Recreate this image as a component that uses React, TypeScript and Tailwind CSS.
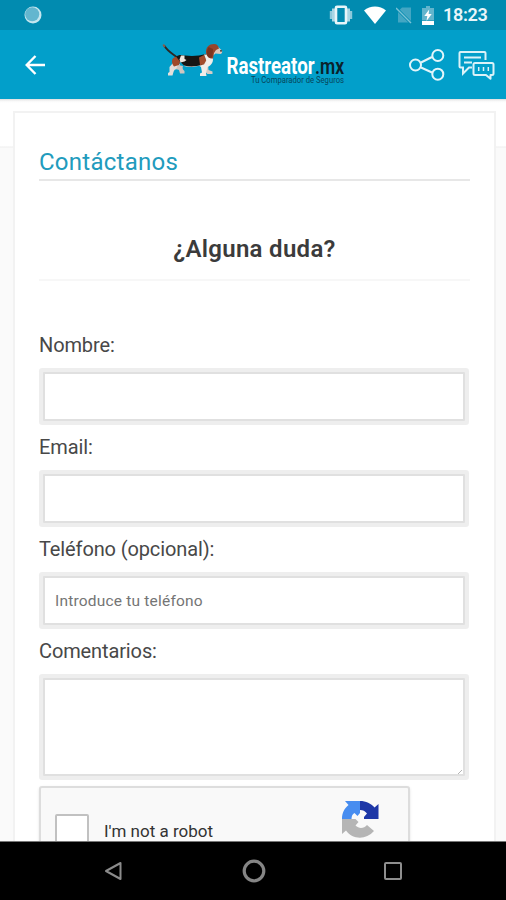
import type { ReactNode } from 'react';

interface FieldProps {
  label: string;
  children: ReactNode;
}

const inputClass =
  'block w-full rounded-[1px] border-2 border-[#e0e0e0] bg-white px-[10px] text-[15.5px] tracking-[0.2px] text-gray-700 outline-none ring-4 ring-[#eeeeee] placeholder:text-[#757575]';

function StatusBar() {
  return (
    <div className="flex h-[30px] shrink-0 items-center bg-[#018bb0] pl-[24px] text-white">
      <svg className="h-[18px] w-[18px]" viewBox="0 0 18 18">
        <circle cx="9" cy="9" r="8.5" fill="#c5e6ef" />
        <circle cx="8.2" cy="8.2" r="7" fill="#63b6cf" />
      </svg>
      <svg className="ml-[287px] h-[20px] w-[24px]" viewBox="0 0 24 20">
        <rect x="0.8" y="6" width="2.2" height="8" fill="#8dc9db" />
        <rect x="3" y="3.5" width="3" height="13" fill="#a9d6e4" />
        <rect x="18" y="3.5" width="3" height="13" fill="#a9d6e4" />
        <rect x="21" y="6" width="2.2" height="8" fill="#8dc9db" />
        <rect x="7" y="1.8" width="10" height="16.4" rx="1" fill="none" stroke="#e7f5f9" strokeWidth="2.6" />
      </svg>
      <svg className="ml-[11px] h-[18px] w-[22px]" viewBox="0 0 22 18">
        <path d="M0 4.5C6-1 16-1 22 4.5L11 18Z" fill="#fff" />
      </svg>
      <svg className="ml-[10px] h-[18px] w-[16px]" viewBox="0 0 16 18">
        <path d="M6 1.500h9v15H2V5.500Z" fill="#43a6c3" />
        <path d="M0 2 15 17" stroke="#018bb0" strokeWidth="3" />
        <path d="M0 2 15 17" stroke="#7cc2d6" strokeWidth="1.5" />
      </svg>
      <svg className="ml-[10px] h-[19px] w-[12px]" viewBox="0 0 12 19">
        <path d="M4 0h4v2h4v12H0V2h4Z" fill="#62b5cd" />
        <path d="M0 14.8h12V19H0Z" fill="#fff" />
        <path d="M7.2 3.5 2.3 10h3L4.5 15l5.2-7H6.6Z" fill="#fff" />
      </svg>
      <span className="ml-[9px] text-[18px] font-semibold leading-[30px] tracking-[-0.3px] text-[#e9f6fa]">18:23</span>
    </div>
  );
}

function Logo() {
  return (
    <svg className="h-[56px] w-[190px] overflow-visible" viewBox="161 37 190 56">
      {/* Basset hound */}
      <path d="M164.500 46c3 5 7 7 12 11" fill="none" stroke="#2b2724" strokeWidth="1.800" strokeLinecap="round" />
      <path d="M163.300 44.500l1.500 2.500" stroke="#8c5a4a" strokeWidth="1.800" />
      <path d="M173 63l7 1-2 5c-3 0-4 1-4.500 3l-1 3.500h-4.500v-2.500l1.500-1v-5Z" fill="#e4dfdb" />
      <path d="M178 65l5 1c-1 2 0 4 1.500 5v2.500H180l-1-3.500-3-1Z" fill="#cfc6c0" />
      <path d="M204 64l4 0 .5 6 4 1.500V74h-5l-3-3Z" fill="#d5cdc7" />
      <path d="M198 65l11-10 3.500 2c1.500 4-.5 8-5 10l-1.500 6 .5 3H200v-2.500l2-1-1-5.500Z" fill="#f0ece8" />
      <path d="M184 66c5 1.500 10 1.500 17-1l-2-3h-14Z" fill="#e6dfd9" />
      <path d="M172.500 59c2-3 6-3.500 9-1l-2.500 7-5 1.500c-2-2-2.500-5-1.500-7.500Z" fill="#a04a2a" />
      <path d="M176 56.500c2-1.500 5-2 9-1 7 1 14 .5 21-1.500l1 4-5 7c-6 1.500-12 2-18 .5l-4-4Z" fill="#171513" />
      <path d="M181 55.500l3.500 0 0 3.500 2 1-2 1.500-4 1-1-3Z" fill="#efe7df" />
      <path d="M199 57.500l5-2.500 2.500 5-2.500 4.500-4 .5Z" fill="#a34c2c" />
      <path d="M204 54.500l3 0 4 8-3 2Z" fill="#f3efeb" />
      <path d="M212 46l5 0 5 4.500c.5 1.500 0 3-1.500 3.500l-5-.5-3.500 3Z" fill="#dcc7bc" />
      <path d="M206 52c0-5 3-8 8-8 3 0 4.500 2 5 4.500l-3 1.500-2 3-1 5.500c-4 .5-7-3-7-6.500Z" fill="#96452b" />
      <path d="M208.500 47c-2 3-2 7-.5 10 2 1.500 4 1 4.500-1l.5-7Z" fill="#7b341f" />
      <circle cx="221" cy="50.800" r=".9" fill="#29201c" />
      <g fontFamily="Roboto, 'Liberation Sans', sans-serif">
        <text x="226.500" y="74" fontSize="23" fontWeight="700" fill="#fff" textLength="88" lengthAdjust="spacingAndGlyphs">
          Rastreator
        </text>
        <text x="315" y="74" fontSize="22" fontWeight="600" fill="#0b222b" textLength="29" lengthAdjust="spacingAndGlyphs">
          .mx
        </text>
        <text x="251" y="82.800" fontSize="8.500" fill="#07465a" textLength="93" lengthAdjust="spacingAndGlyphs">
          Tu Comparador de Seguros
        </text>
      </g>
    </svg>
  );
}

function Header() {
  return (
    <header className="flex h-[69px] shrink-0 items-center bg-[#029fca]">
      <svg className="ml-[25px] h-[20px] w-[21px]" viewBox="0 0 21 20" fill="none" stroke="#fff" strokeWidth="2.4">
        <path d="M20 10H2M10.500 1 1.700 10l8.800 9" />
      </svg>
      <div className="ml-[115px]">
        <Logo />
      </div>
      <svg className="ml-[58px] h-[32px] w-[36px]" viewBox="0 0 36 32" fill="none" stroke="#e3f5fa" strokeWidth="2">
        <path d="M12 13.500 23 8M12 18.500l11 5" />
        <circle cx="6.500" cy="16" r="5.500" />
        <circle cx="28.800" cy="6.500" r="5.500" />
        <circle cx="28.800" cy="25.200" r="5.500" />
      </svg>
      <svg className="ml-[13px] h-[30px] w-[37px]" viewBox="0 0 37 30" fill="none" stroke="#dbf2f8" strokeWidth="2">
        <path d="M27.500 10V3q0-1-1-1h-24q-1 0-1 1v13.500q0 1 1 1H5v6l6-6h3" />
        <path d="M6 7.500h17M6 12.500h8" />
        <path d="M17 13h17q1.500 0 1.500 1.500v9q0 1.500-1.500 1.500h-1.500v3.800L28 25H17q-1.500 0-1.500-1.500v-9Q15.500 13 17 13Z" strokeLinejoin="round" />
        <path d="M20.700 17v4M25.500 17v4M30.300 17v4" strokeWidth="1.500" />
      </svg>
    </header>
  );
}

function Field({ label, children }: FieldProps) {
  return (
    <label className="block">
      <span className="block h-[39px] text-[20px] leading-[24px] tracking-[-0.12px] text-[#484848]">{label}</span>
      <span className="block pl-[4px] pr-[5px]">{children}</span>
    </label>
  );
}

function Recaptcha() {
  return (
    <div className="flex h-[100px] w-[371px] rounded-[3px] border-2 border-[#dddddd] bg-[#f9f9f9] shadow-sm">
      <div className="ml-[14px] mt-[26px] h-[35px] w-[34px] rounded-[2px] border-2 border-[#c1c1c1] bg-white" />
      <span className="ml-[15px] mt-[31px] text-[17px] leading-[24px] text-[#333]">I&apos;m not a robot</span>
      <svg className="ml-[128px] mt-[12px] h-[38px] w-[38px]" viewBox="0 0 38 38">
        <path d="M19 1H4l3.500 4C3 9 1 13 1 19h9.500c0-3 1-5 3-6l3 3 2.500-3Z" fill="#478df0" />
        <path d="M19 1v9c3 0 5 1 7 3.500L23 17v2h14.500V4l-4 3.500C30 3.500 25 1 19 1Z" fill="#1e37a7" />
        <path d="M1 19v15l4-3.500c7 9.500 20 9.500 28 .5l-7-6c-3 3.500-8 4-11.500.5l3-3.500-3-3Z" fill="#b5b5b5" />
      </svg>
    </div>
  );
}

function NavigationBar() {
  return (
    <nav className="flex h-[59px] shrink-0 items-center border-t border-[#777] bg-black">
      <svg className="ml-[104px] h-[20px] w-[19px]" viewBox="0 0 19 20">
        <path d="M16.500 2v16L2 10Z" fill="none" stroke="#8b8b8b" strokeWidth="2" strokeLinejoin="round" />
      </svg>
      <svg className="ml-[119px] h-[24px] w-[24px]" viewBox="0 0 24 24">
        <circle cx="12" cy="12" r="9.800" fill="none" stroke="#858585" strokeWidth="3.200" />
      </svg>
      <div className="ml-[118px] h-[18px] w-[18px] rounded-[2px] border-2 border-[#8e8e8e]" />
    </nav>
  );
}

export default function App() {
  return (
    <div className="flex h-[900px] w-[506px] flex-col overflow-hidden bg-[#fafafa] font-[Roboto,'Liberation_Sans',sans-serif]">
      <StatusBar />
      <Header />
      <main className="h-[742px] shrink-0 overflow-hidden bg-[linear-gradient(#dedede_0px,#f8f8f8_2px,#ffffff_4px,#ffffff_47px,#eeeeee_48px,#fafafa_49px)] pl-[13px] pt-[12px]">
        <section className="h-[800px] w-[483px] border-2 border-[#f2f2f2] bg-white px-[24px]">
          <h1 className="mt-[34px] h-[34px] border-b-2 border-[#e7e7e7] text-[24px] leading-[30px] tracking-[0.25px] text-[#219bbd]">
            Contáctanos
          </h1>
          <h2 className="h-[100px] border-b-2 border-[#f7f7f7] pt-[54px] text-center text-[24px] font-semibold leading-[28px] tracking-[0.3px] text-[#3b3b3b]">
            ¿Alguna duda?
          </h2>
          <form className="mt-[52px]">
            <div className="space-y-[14px]">
              <Field label="Nombre:">
                <input className={`${inputClass} h-[49px]`} type="text" />
              </Field>
              <Field label="Email:">
                <input className={`${inputClass} h-[49px]`} type="email" />
              </Field>
              <Field label="Teléfono (opcional):">
                <input className={`${inputClass} h-[49px]`} type="tel" placeholder="Introduce tu teléfono" />
              </Field>
              <Field label="Comentarios:">
                <span className="relative block">
                  <textarea className={`${inputClass} h-[98px] resize-none`} />
                  <svg className="absolute bottom-[2px] right-[3px] h-[4px] w-[4px]" viewBox="0 0 4 4">
                    <path d="M0 4 4 0" stroke="#b5b5b5" />
                  </svg>
                </span>
              </Field>
            </div>
            <div className="mt-[10px]">
              <Recaptcha />
            </div>
          </form>
        </section>
      </main>
      <NavigationBar />
    </div>
  );
}
